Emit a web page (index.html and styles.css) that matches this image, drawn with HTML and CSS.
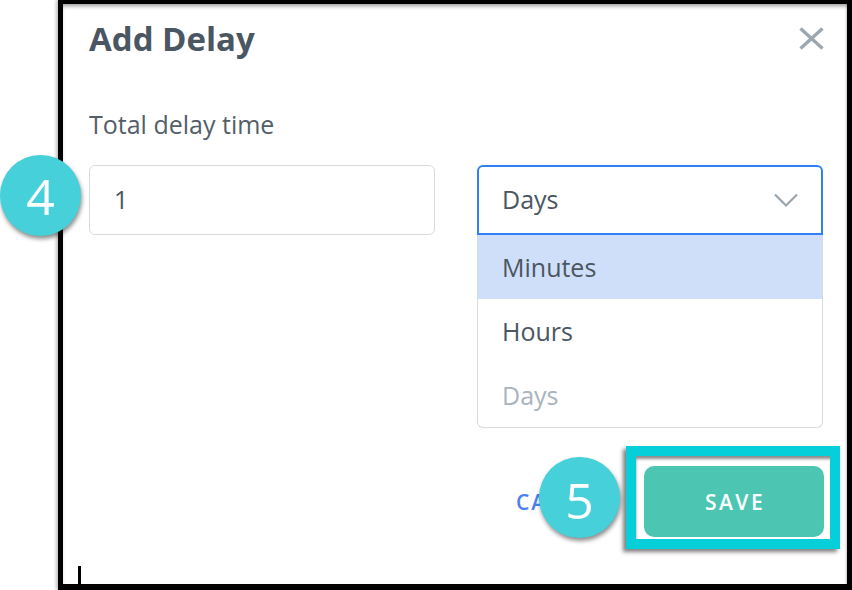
FILE: index.html
```html
<!DOCTYPE html>
<html lang="en">
<head>
<meta charset="utf-8">
<title>Add Delay</title>
<link rel="stylesheet" href="styles.css">
</head>
<body>
<div class="frame">
  <div class="dialog">
    <div class="header">
      <h1 class="title">Add Delay</h1>
      <button class="close" aria-label="Close">
        <svg width="25" height="23" viewBox="0 0 25 23"><path d="M1.5 1.5 L23.5 21.5 M23.5 1.5 L1.5 21.5" stroke="#9ca7af" stroke-width="3.4" stroke-linecap="butt" fill="none"/></svg>
      </button>
    </div>
    <div class="label">Total delay time</div>
    <div class="row">
      <div class="field input">1</div>
      <div class="select-wrap">
        <div class="field select">
          <span>Days</span>
          <svg width="24" height="14" viewBox="0 0 24 14"><path d="M1 1.5 L12 12.5 L23 1.5" stroke="#9aa5ad" stroke-width="2.2" fill="none"/></svg>
        </div>
        <ul class="options">
          <li class="opt active">Minutes</li>
          <li class="opt">Hours</li>
          <li class="opt disabled">Days</li>
        </ul>
      </div>
    </div>
    <div class="footer">
      <button class="cancel">CANCEL</button>
      <button class="save">SAVE<span class="highlight"></span></button>
    </div>
  </div>
</div>
<div class="badge b4">4</div>
<div class="badge b5">5</div>
</body>
</html>
```
FILE: styles.css
```css
body {
  margin: 0;
  background: #fff;
  font-family: "Open Sans", "Liberation Sans", sans-serif;
  color: #4b5661;
  position: relative;
  width: 852px;
  height: 590px;
  overflow: hidden;
}

.frame {
  margin-left: 58px;
  width: 794px;
  height: 590px;
  box-sizing: border-box;
  border-style: solid;
  border-color: #000;
  border-width: 4px 5px 6px 5px;
  position: relative;
  box-shadow: -2px 0 3px rgba(0, 0, 0, 0.25);
}

.frame::after {
  content: "";
  position: absolute;
  left: 15px;
  bottom: 0;
  width: 3px;
  height: 18px;
  background: #000;
}

.dialog {
  height: 100%;
  box-sizing: border-box;
  padding: 15px 24px 0 26px;
  background: #fff;
  box-shadow: inset 0 4px 4px -2px rgba(0, 0, 0, 0.4), inset -2px 0 2px -1px rgba(0, 0, 0, 0.15);
}

.header {
  display: flex;
  justify-content: space-between;
  align-items: flex-start;
}

.title {
  margin: 0;
  font-size: 33px;
  line-height: 40px;
  font-weight: 700;
  color: #4a5662;
}

.close {
  margin: 8px -1px 0 0;
  padding: 0;
  border: 0;
  background: none;
  display: block;
  line-height: 0;
}

.label {
  margin-top: 50px;
  font-size: 25px;
  line-height: 30px;
  color: #525e69;
}

.row {
  margin-top: 26px;
  display: grid;
  grid-template-columns: 346px 346px;
  column-gap: 42px;
  align-items: start;
}

.field {
  height: 70px;
  box-sizing: border-box;
  display: flex;
  align-items: center;
  font-size: 25px;
  color: #4b5661;
}

.input {
  border: 1px solid #d6dbe0;
  border-radius: 6px;
  padding: 0 0 3px 24px;
}

.select {
  border: 2px solid #2f7ff7;
  border-radius: 6px 6px 0 0;
  padding: 0 23px 3px 23px;
  justify-content: space-between;
}

.select svg {
  margin-top: 3px;
}

.options {
  margin: 0;
  padding: 0;
  list-style: none;
  border: 1px solid #d6dbe0;
  border-top: 0;
  border-radius: 0 0 6px 6px;
  overflow: hidden;
}

.opt {
  height: 64px;
  line-height: 64px;
  padding-left: 24px;
  font-size: 25px;
  color: #4b5661;
}

.opt.active {
  background: #cfdffa;
}

.opt.disabled {
  color: #a9b4bc;
}

.footer {
  margin-top: 38px;
  display: flex;
  justify-content: flex-end;
  align-items: center;
  gap: 36px;
}

.cancel {
  padding: 0;
  border: 0;
  background: none;
  font-family: "Open Sans", "Liberation Sans", sans-serif;
  font-size: 21px;
  font-weight: 600;
  letter-spacing: 2px;
  color: #4a80f0;
}

.save {
  position: relative;
  width: 180px;
  height: 71px;
  margin-right: -1px;
  border: 0;
  border-radius: 10px;
  background: #4cc6b3;
  color: #fff;
  font-family: "Open Sans", "Liberation Sans", sans-serif;
  font-size: 21px;
  font-weight: 600;
  letter-spacing: 2.5px;
  padding: 0 0 0 2px;
}

.highlight {
  position: absolute;
  left: -18px;
  top: -20px;
  right: -16px;
  bottom: -12px;
  border: 10px solid #07cfd9;
  box-shadow: -3px 3px 4px rgba(0, 0, 0, 0.5), inset 1px 4px 3px -1px rgba(0, 0, 0, 0.45);
}

.badge {
  position: absolute;
  width: 81px;
  height: 81px;
  border-radius: 50%;
  background: #46d0d9;
  color: #fff;
  font-family: "Open Sans", "Liberation Sans", sans-serif;
  font-size: 50px;
  line-height: 1;
  display: flex;
  align-items: center;
  justify-content: center;
  box-shadow: 1px 3px 4px rgba(0, 0, 0, 0.45);
}

.b4 {
  left: 0;
  top: 155px;
}

.b5 {
  left: 539px;
  top: 457px;
  padding-top: 4px;
  box-sizing: border-box;
}
```
